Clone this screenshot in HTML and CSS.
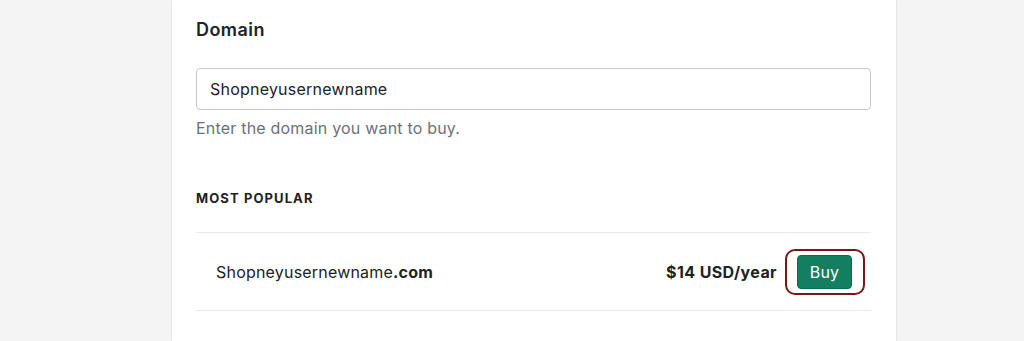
FILE: index.html
```html
<!DOCTYPE html>
<html lang="en">
<head>
<meta charset="utf-8">
<title>Domain</title>
<link rel="stylesheet" href="styles.css">
</head>
<body>
<main class="page">
  <section class="card">
    <h2 class="card-title">Domain</h2>
    <div class="field">
      <input class="text-input" type="text" value="Shopneyusernewname">
      <p class="help">Enter the domain you want to buy.</p>
    </div>
    <h3 class="section-label">MOST POPULAR</h3>
    <ul class="domain-list">
      <li class="domain-row">
        <span class="domain-name">Shopneyusernewname<strong>.com</strong></span>
        <span class="domain-actions">
          <span class="price">$14 USD/year</span>
          <span class="buy-wrap">
            <button class="buy-btn" type="button">Buy</button>
            <span class="highlight"></span>
          </span>
        </span>
      </li>
    </ul>
  </section>
</main>
</body>
</html>
```
FILE: styles.css
```css
* { box-sizing: border-box; }
html, body { margin: 0; padding: 0; }
body {
  background: #f4f4f4;
  font-family: "Inter", "Liberation Sans", sans-serif;
  color: #202223;
  height: 341px;
  overflow: hidden;
}
.page {
  display: flex;
  justify-content: flex-start;
  padding-left: 172px;
}
.card {
  width: 724px;
  min-height: 341px;
  background: #fff;
  box-shadow: 0 0 2px rgba(0,0,0,0.12), 0 0 1px rgba(0,0,0,0.08);
  padding: 18px 25px 0 24px;
}
.card-title {
  margin: 0;
  font-size: 18px;
  line-height: 24px;
  font-weight: 600;
  letter-spacing: 0.45px;
}
.field { margin-top: 26px; }
.text-input {
  display: block;
  width: 100%;
  height: 42px;
  border: 1px solid #c4c6c9;
  border-radius: 4px;
  padding: 0 13px;
  font-family: inherit;
  font-size: 16px;
  letter-spacing: 0.22px;
  color: #202223;
  background: #fff;
  outline: none;
}
.help {
  margin: 8px 0 0;
  font-size: 16px;
  line-height: 20px;
  letter-spacing: 0.2px;
  color: #6d7175;
}
.section-label {
  margin: 52px 0 0;
  font-size: 13px;
  line-height: 16px;
  font-weight: 700;
  letter-spacing: 1.1px;
}
.domain-list {
  list-style: none;
  margin: 26px 0 0;
  padding: 0;
  border-top: 1px solid #e8eaeb;
}
.domain-row {
  display: flex;
  align-items: center;
  justify-content: space-between;
  height: 78px;
  padding: 0 19px 0 20px;
  border-bottom: 1px solid #e8eaeb;
  font-size: 16px;
  letter-spacing: 0.2px;
}
.domain-name strong { font-weight: 700; }
.domain-actions {
  display: flex;
  align-items: center;
  gap: 20px;
}
.price { font-weight: 700; letter-spacing: 0.4px; }
.buy-wrap { position: relative; display: inline-flex; }
.buy-btn {
  width: 55px;
  height: 34px;
  background: #137f60;
  color: #fff;
  border: 1px solid #0e6b51;
  border-radius: 4px;
  font-family: inherit;
  font-size: 16px;
  letter-spacing: 0.2px;
  padding: 0;
  cursor: pointer;
}
.highlight {
  position: absolute;
  left: -12px;
  right: -13px;
  top: -6px;
  bottom: -6px;
  border: 2px solid #7b1616;
  border-radius: 10px;
  pointer-events: none;
}
```
